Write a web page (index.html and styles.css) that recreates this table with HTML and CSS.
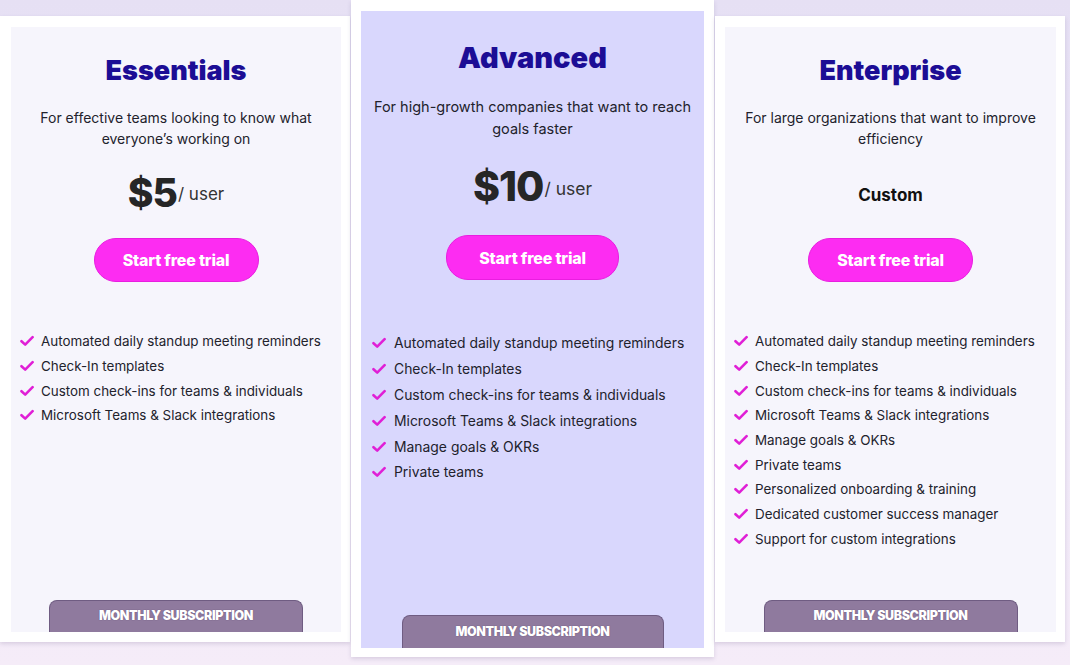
FILE: index.html
```html
<!DOCTYPE html>
<html lang="en">
<head>
<meta charset="utf-8">
<title>Pricing</title>
<link rel="stylesheet" href="styles.css">
</head>
<body>
<svg width="0" height="0" class="defs">
  <defs>
    <symbol id="check" viewBox="0 0 14 12">
      <path d="M1.5 6.2 L5.2 9.6 L12.6 2.2" fill="none" stroke="currentColor" stroke-width="2.6" stroke-linecap="round" stroke-linejoin="round"/>
    </symbol>
  </defs>
</svg>
<main class="plans">
  <section class="card card-side">
    <div class="panel">
      <h2 class="title">Essentials</h2>
      <p class="desc">For effective teams looking to know what everyone’s working on</p>
      <div class="price"><span class="amount">$5</span><span class="per">/ user</span></div>
      <a class="cta">Start free trial</a>
      <ul class="features">
        <li><svg class="ico"><use href="#check"/></svg>Automated daily standup meeting reminders</li>
        <li><svg class="ico"><use href="#check"/></svg>Check-In templates</li>
        <li><svg class="ico"><use href="#check"/></svg>Custom check-ins for teams &amp; individuals</li>
        <li><svg class="ico"><use href="#check"/></svg>Microsoft Teams &amp; Slack integrations</li>
      </ul>
      <div class="tab">MONTHLY SUBSCRIPTION</div>
    </div>
  </section>
  <section class="card card-featured">
    <div class="panel">
      <h2 class="title">Advanced</h2>
      <p class="desc">For high-growth companies that want to reach goals faster</p>
      <div class="price"><span class="amount">$10</span><span class="per">/ user</span></div>
      <a class="cta">Start free trial</a>
      <ul class="features">
        <li><svg class="ico"><use href="#check"/></svg>Automated daily standup meeting reminders</li>
        <li><svg class="ico"><use href="#check"/></svg>Check-In templates</li>
        <li><svg class="ico"><use href="#check"/></svg>Custom check-ins for teams &amp; individuals</li>
        <li><svg class="ico"><use href="#check"/></svg>Microsoft Teams &amp; Slack integrations</li>
        <li><svg class="ico"><use href="#check"/></svg>Manage goals &amp; OKRs</li>
        <li><svg class="ico"><use href="#check"/></svg>Private teams</li>
      </ul>
      <div class="tab">MONTHLY SUBSCRIPTION</div>
    </div>
  </section>
  <section class="card card-side card-right">
    <div class="panel">
      <h2 class="title">Enterprise</h2>
      <p class="desc">For large organizations that want to improve efficiency</p>
      <div class="price"><span class="custom">Custom</span></div>
      <a class="cta">Start free trial</a>
      <ul class="features">
        <li><svg class="ico"><use href="#check"/></svg>Automated daily standup meeting reminders</li>
        <li><svg class="ico"><use href="#check"/></svg>Check-In templates</li>
        <li><svg class="ico"><use href="#check"/></svg>Custom check-ins for teams &amp; individuals</li>
        <li><svg class="ico"><use href="#check"/></svg>Microsoft Teams &amp; Slack integrations</li>
        <li><svg class="ico"><use href="#check"/></svg>Manage goals &amp; OKRs</li>
        <li><svg class="ico"><use href="#check"/></svg>Private teams</li>
        <li><svg class="ico"><use href="#check"/></svg>Personalized onboarding &amp; training</li>
        <li><svg class="ico"><use href="#check"/></svg>Dedicated customer success manager</li>
        <li><svg class="ico"><use href="#check"/></svg>Support for custom integrations</li>
      </ul>
      <div class="tab">MONTHLY SUBSCRIPTION</div>
    </div>
  </section>
</main>
</body>
</html>
```
FILE: styles.css
```css
* { box-sizing: border-box; }
html, body { margin: 0; padding: 0; }
body {
  width: 1070px;
  height: 665px;
  overflow: hidden;
  background: linear-gradient(180deg, #e6e0f4 0%, #efe8f7 60%, #f5ecf8 100%);
  font-family: "Inter", "Liberation Sans", sans-serif;
  color: #222230;
}
.defs { position: absolute; }
.plans {
  display: flex;
  align-items: flex-start;
  gap: 1px;
}
.card {
  background: #ffffff;
  display: flex;
  box-shadow: 0 2px 4px rgba(90, 70, 120, 0.18);
}
.card-side {
  width: 350px;
  height: 626px;
  margin-top: 16px;
  padding: 11px 9px 10px 11px;
}
.card-right { padding-left: 10px; }
.card-featured {
  width: 363px;
  height: 657px;
  padding: 11px 10px 9px 10px;
}
.panel {
  flex: 1;
  display: flex;
  flex-direction: column;
  align-items: center;
  background: #f6f5fc;
}
.card-featured .panel { background: #d9d7fd; }

.title {
  margin: 28px 0 0;
  font-size: 27px;
  line-height: 32px;
  font-weight: 900;
  color: #1c0d95;
  letter-spacing: 0;
}
.desc {
  margin: 20px 0 0;
  padding: 0 20px;
  font-size: 14px;
  line-height: 21px;
  text-align: center;
  color: #22222c;
}
.price {
  margin-top: 21px;
  height: 44px;
  display: flex;
  align-items: center;
  justify-content: center;
}
.amount {
  font-size: 39px;
  font-weight: 800;
  color: #262626;
  letter-spacing: -1px;
}
.per {
  font-size: 17px;
  color: #333;
  margin-left: 1px;
  margin-top: 4px;
}
.custom {
  font-size: 17px;
  font-weight: 700;
  color: #111;
  margin-top: 6px;
}
.cta {
  margin-top: 24px;
  width: 165px;
  height: 44px;
  border-radius: 22px;
  background: #fd2cf2;
  border: 1px solid #e91ee0;
  color: #ffffff;
  font-size: 16px;
  font-weight: 800;
  display: flex;
  align-items: center;
  justify-content: center;
  letter-spacing: -0.2px;
}
.features {
  list-style: none;
  margin: 47px 0 0;
  padding: 0 0 0 9px;
  align-self: stretch;
}
.features li {
  display: flex;
  align-items: center;
  height: 24.7px;
  font-size: 13.4px;
  color: #22222c;
}
.ico {
  width: 14px;
  height: 12px;
  color: #e01fd6;
  margin-right: 7px;
  flex: none;
}
.tab {
  margin-top: auto;
  width: 254px;
  height: 32px;
  background: #8f7a9e;
  border: 1px solid #6f5c82;
  border-bottom: none;
  border-radius: 8px 8px 0 0;
  color: #ffffff;
  font-size: 12.5px;
  font-weight: 900;
  letter-spacing: -0.4px;
  display: flex;
  justify-content: center;
  padding-top: 7px;
  text-shadow: 0 0 1px rgba(40, 20, 60, 0.6);
}

/* featured (middle) card scale */
.card-featured .title { margin-top: 30px; font-size: 29px; line-height: 34px; }
.card-featured .desc { margin-top: 21px; font-size: 14.5px; line-height: 22px; padding: 0 6px; }
.card-featured .price { margin-top: 23px; height: 46px; }
.card-featured .amount { font-size: 41px; }
.card-featured .per { font-size: 17.5px; }
.card-featured .cta { margin-top: 26px; width: 173px; height: 45px; }
.card-featured .features { margin-top: 50px; padding-left: 11px; }
.card-featured .features li { height: 25.9px; font-size: 13.9px; }
.card-featured .ico { margin-right: 8px; }
.card-featured .tab { width: 262px; height: 33px; padding-top: 8px; }
```
